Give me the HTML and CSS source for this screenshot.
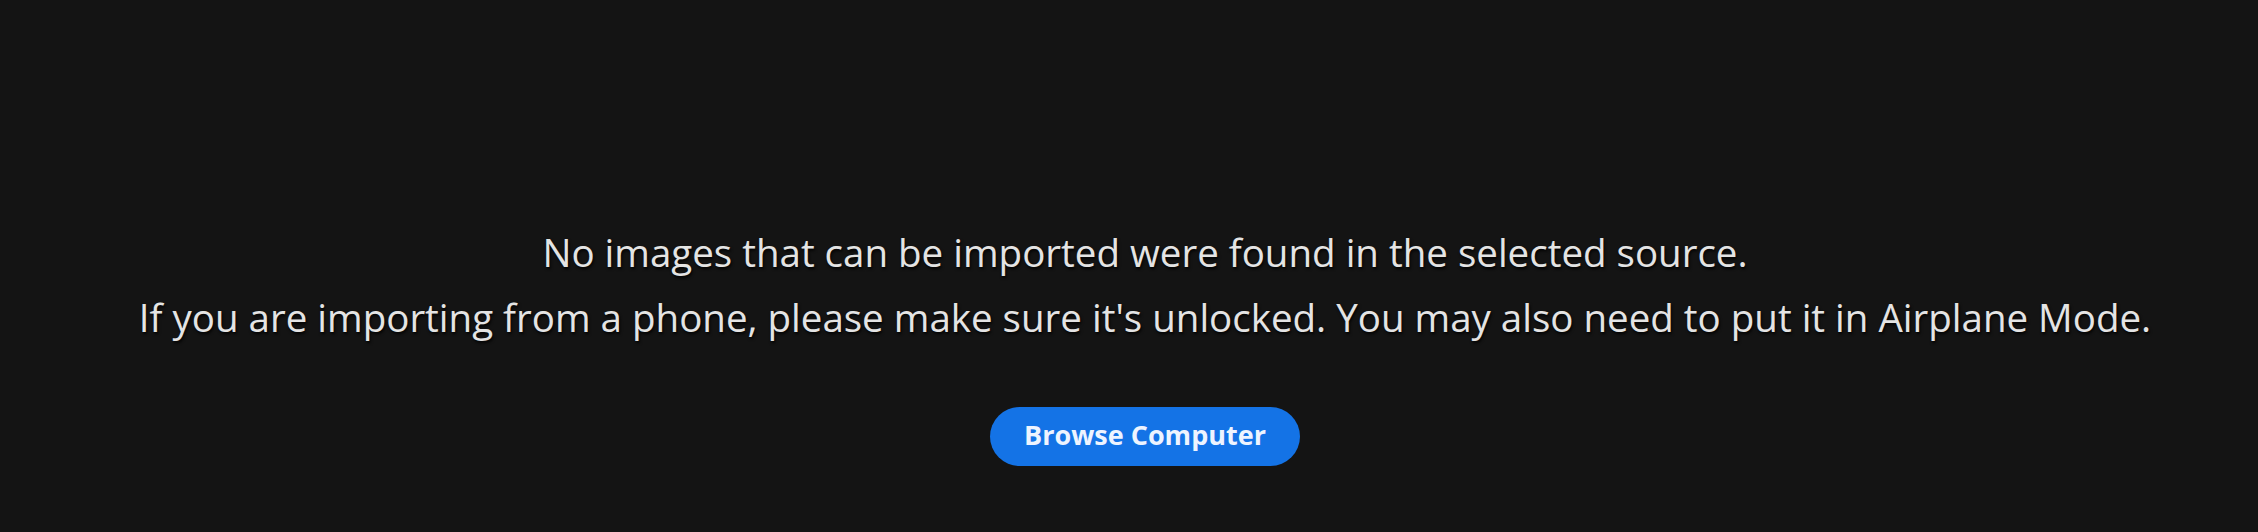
FILE: index.html
```html
<!DOCTYPE html>
<html>
<head>
<meta charset="utf-8">
<title>Import</title>
<link rel="stylesheet" href="styles.css">
</head>
<body>
<main class="empty">
  <p class="msg">No images that can be imported were found in the selected source.</p>
  <p class="msg">If you are importing from a phone, please make sure it's unlocked. You may also need to put it in Airplane Mode.</p>
  <button class="browse" type="button">Browse Computer</button>
</main>
</body>
</html>
```
FILE: styles.css
```css
html,body{margin:0;height:100%;}
body{background:#141414;font-family:"Open Sans","Noto Sans",sans-serif;}
.empty{
  display:flex;
  flex-direction:column;
  align-items:center;
  padding:220px 0 0 32px;
}
.msg{
  margin:0;
  font-size:38.5px;
  line-height:65px;
  color:#e4e4e4;
  white-space:nowrap;
  text-shadow:1px 2px 3px rgba(0,0,0,0.9);
}
.browse{
  margin-top:57px;
  height:59px;
  padding:0 34px 4px;
  border:0;
  border-radius:30px;
  background:#1473e6;
  color:#eef4ff;
  font-family:"Open Sans","Noto Sans",sans-serif;
  font-weight:700;
  font-size:27px;
  line-height:55px;
  cursor:pointer;
}
```
